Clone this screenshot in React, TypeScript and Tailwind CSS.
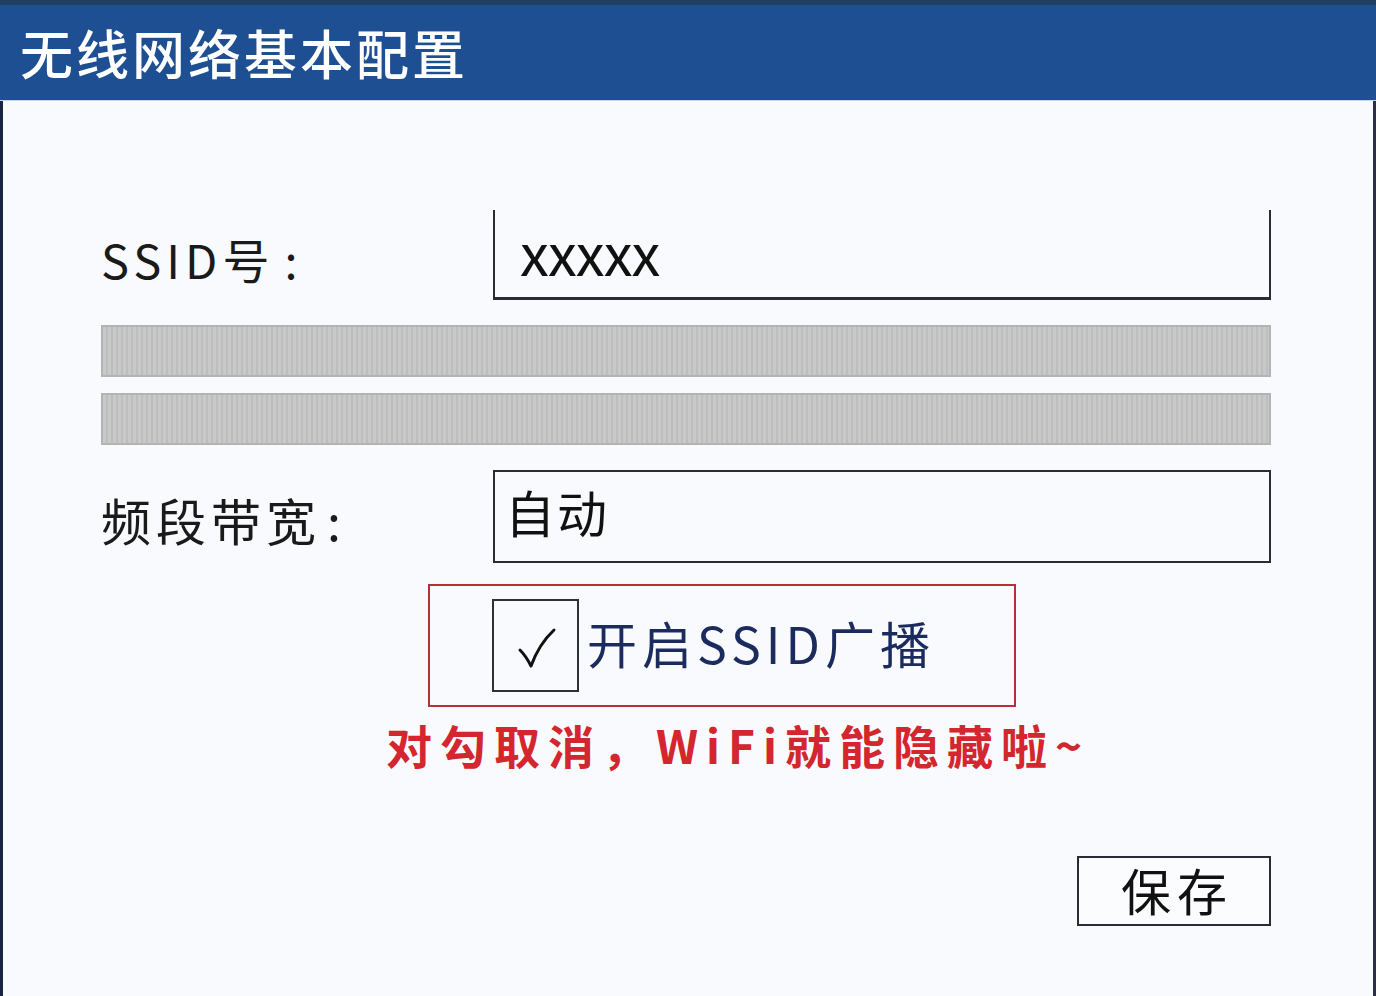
export default function App() {
  const font = { fontFamily: '"Noto Sans CJK SC", "Noto Sans", sans-serif' };
  return (
    <div className="w-[1376px] h-[996px] bg-[#f8fafd] flex flex-col overflow-hidden" style={font}>
      {/* Header */}
      <div className="h-[101px] bg-[#1e4f92] border-t-[5px] border-[#1f3f63] border-b border-b-[#c9d4e4] flex items-center pl-[20px]">
        <h1 className="text-[53px] font-medium text-white tracking-[3px] leading-none">无线网络基本配置</h1>
      </div>

      {/* Body */}
      <div className="flex-1 flex flex-col border-l-[3px] border-l-[#1c2340] border-r-[3px] border-r-[#2a2f45] pl-[98px] pr-[102px]">
        {/* SSID row */}
        <div className="flex items-center mt-[109px] h-[90px]">
          <div className="w-[392px] text-[47px] text-[#1a1a1a] leading-none flex items-center pt-[6px]">
            <span className="tracking-[5px]">SSID号</span>
            <span className="ml-[10px]">:</span>
          </div>
          <div className="flex-1 h-[90px] border-l-2 border-r-2 border-b-[3px] border-[#2b2a36] flex items-center pl-[25px]">
            <span className="text-[58px] text-[#111] leading-none tracking-[-1px] pb-[6px]">xxxxx</span>
          </div>
        </div>

        {/* Masked rows */}
        <div className="mt-[25px] h-[52px] bg-[#c4c4c4] border-2 border-[#b3b3b3] bg-[repeating-linear-gradient(90deg,#c9c9c9_0px,#c9c9c9_3px,#bdbdbd_3px,#bdbdbd_5px)]" />
        <div className="mt-[16px] h-[52px] bg-[#c4c4c4] border-2 border-[#b3b3b3] bg-[repeating-linear-gradient(90deg,#c9c9c9_0px,#c9c9c9_3px,#bdbdbd_3px,#bdbdbd_5px)]" />

        {/* Band width row */}
        <div className="flex items-center mt-[25px]">
          <div className="w-[392px] text-[50px] text-[#1a1a1a] leading-none flex items-center pt-[4px]">
            <span className="tracking-[5px]">频段带宽</span>
            <span className="ml-[6px]">:</span>
          </div>
          <div className="flex-1 h-[93px] border-2 border-[#2b2a36] flex items-center pl-[10px]">
            <span className="text-[50px] text-[#111] leading-none tracking-[2px] pb-[12px]">自动</span>
          </div>
        </div>

        {/* Broadcast checkbox */}
        <div className="flex mt-[21px] pl-[327px]">
          <div className="w-[588px] h-[123px] border-2 border-[#b3303c] flex items-center pl-[62px]">
            <div className="w-[87px] h-[93px] border-2 border-[#2f2f35] flex items-center justify-center">
              <svg width="40" height="44" viewBox="0 0 40 44" className="mt-[4px] ml-[2px]">
                <path d="M3 24 Q9 30 14 40 Q22 18 37 4" fill="none" stroke="#111" strokeWidth="3" strokeLinecap="round" strokeLinejoin="round" />
              </svg>
            </div>
            <span className="ml-[8px] text-[50px] text-[#1b2b5e] leading-none tracking-[5px] pb-[8px]">开启SSID广播</span>
          </div>
        </div>

        {/* Hint */}
        <div className="mt-[14px] pl-[285px] text-[46px] font-bold text-[#d3262e] leading-none tracking-[8px]">
          对勾取消，WiFi就能隐藏啦~
        </div>

        {/* Save */}
        <div className="flex justify-end mt-[89px]">
          <button className="w-[194px] h-[70px] border-2 border-[#2b2a36] bg-[#fbfcfe] flex items-center justify-center text-[50px] text-[#111] leading-none tracking-[6px] pl-[6px] pb-[4px]">
            保存
          </button>
        </div>
      </div>
    </div>
  );
}
